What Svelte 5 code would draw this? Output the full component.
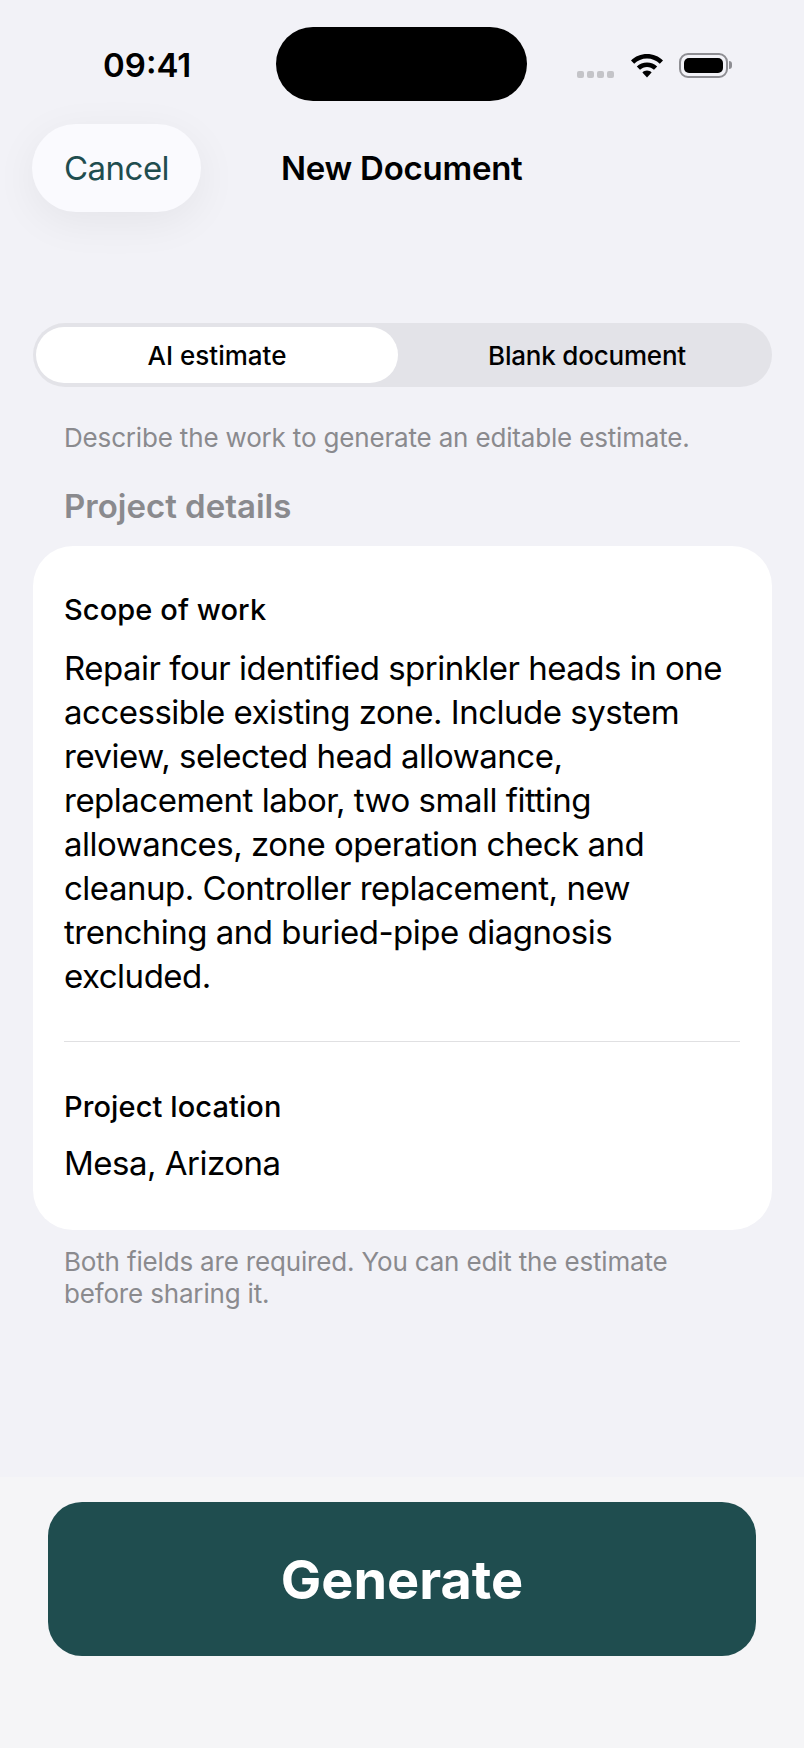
<script>
  let mode = $state("ai");
  const scope =
    "Repair four identified sprinkler heads in one accessible existing zone. Include system review, selected head allowance, replacement labor, two small fitting allowances, zone operation check and cleanup. Controller replacement, new trenching and buried-pipe diagnosis excluded.";
</script>

<div class="screen">
  <header class="status">
    <span class="time">09:41</span>
    <div class="island"></div>
    <div class="indicators">
      <span class="dots"><i></i><i></i><i></i><i></i></span>
      <svg class="wifi" width="34" height="25" viewBox="0 0 34 25">
        <path d="M17 1C10.8 1 5.2 3.4 1 7.4l3.2 3.4C7.6 7.600 12 5.600 17 5.600s9.400 2 12.800 5.200L33 7.400C28.800 3.400 23.200 1 17 1z" />
        <path d="M17 9.400c-3.900 0-7.500 1.500-10.200 4l3.200 3.400c1.800-1.700 4.300-2.800 7-2.800s5.200 1.100 7 2.800l3.200-3.400c-2.700-2.500-6.300-4-10.200-4z" />
        <path d="M17 17.600c-1.800 0-3.400.7-4.600 1.800L17 24.400l4.600-5c-1.200-1.100-2.800-1.800-4.600-1.800z" />
      </svg>
      <span class="battery"><span class="level"></span></span>
      <span class="nub"></span>
    </div>
  </header>

  <nav class="navbar">
    <button class="cancel">Cancel</button>
    <h1>New Document</h1>
  </nav>

  <main>
    <div class="segmented">
      <button class="seg" class:active={mode === "ai"} onclick={() => (mode = "ai")}>AI estimate</button>
      <button class="seg" class:active={mode === "blank"} onclick={() => (mode = "blank")}>Blank document</button>
    </div>

    <p class="hint">Describe the work to generate an editable estimate.</p>
    <h2>Project details</h2>

    <section class="card">
      <div class="field scope">
        <h3>Scope of work</h3>
        <p>{scope}</p>
      </div>
      <div class="field location">
        <h3>Project location</h3>
        <p>Mesa, Arizona</p>
      </div>
    </section>

    <p class="note">Both fields are required. You can edit the estimate before sharing it.</p>
  </main>

  <footer>
    <button class="generate">Generate</button>
  </footer>
</div>

<style>
  :global(body) {
    margin: 0;
    background: #f2f2f7;
  }

  .screen {
    width: 804px;
    height: 1748px;
    display: flex;
    flex-direction: column;
    background: #f2f2f7;
    font-family: Inter, "Liberation Sans", sans-serif;
    color: #000;
    overflow: hidden;
  }

  button {
    font-family: inherit;
    border: 0;
    cursor: pointer;
  }

  h1, h2, h3, p {
    margin: 0;
  }

  .status {
    display: grid;
    grid-template-columns: 276px 251px 1fr;
    align-items: center;
    height: 74px;
    margin-top: 27px;
  }

  .time {
    justify-self: start;
    margin: 2px 0 0 103px;
    font-size: 33px;
    font-weight: 600;
  }

  .island {
    height: 74px;
    border-radius: 37px;
    background: #000;
  }

  .indicators {
    display: flex;
    align-items: center;
    margin-left: 50px;
  }

  .dots {
    display: flex;
    gap: 3px;
    margin-top: 20px;
  }

  .dots i {
    width: 7px;
    height: 7px;
    border-radius: 2px;
    background: #c4c4c8;
  }

  .wifi {
    margin: 2px 0 0 16px;
    fill: #000;
  }

  .battery {
    display: block;
    box-sizing: border-box;
    width: 49px;
    height: 25px;
    margin: 2px 0 0 15px;
    padding: 3px;
    border: 2px solid #8e8e93;
    border-radius: 9px;
  }

  .level {
    display: block;
    height: 100%;
    border-radius: 5px;
    background: #000;
  }

  .nub {
    width: 3px;
    height: 8px;
    margin: 2px 0 0 1px;
    border-radius: 0 3px 3px 0;
    background: #8e8e93;
  }

  .navbar {
    display: flex;
    align-items: center;
    height: 88px;
    margin: 23px 0 0 32px;
  }

  .cancel {
    width: 169px;
    height: 88px;
    border-radius: 44px;
    background: #fafafe;
    color: #1f4d4f;
    font-size: 33px;
    letter-spacing: -0.5px;
    box-shadow: 0 10px 44px rgba(0, 0, 0, 0.06);
  }

  h1 {
    margin-left: 80px;
    font-size: 33px;
    font-weight: 600;
    letter-spacing: -0.25px;
  }

  main {
    padding: 111px 32px 0 33px;
  }

  .segmented {
    display: grid;
    grid-template-columns: 362px 1fr;
    column-gap: 7px;
    height: 64px;
    box-sizing: border-box;
    padding: 4px 3px;
    border-radius: 32px;
    background: #e3e3e8;
  }

  .seg {
    padding: 0;
    border-radius: 28px;
    background: transparent;
    color: #000;
    font-size: 26px;
    font-weight: 450;
    letter-spacing: -0.2px;
  }

  .seg.active {
    background: #fff;
    font-weight: 500;
    letter-spacing: 0;
  }

  .hint {
    margin: 35px 0 0 31px;
    font-size: 26px;
    line-height: 32px;
    letter-spacing: -0.17px;
    color: #8a8a8e;
  }

  h2 {
    margin: 32px 0 0 31px;
    font-size: 33px;
    line-height: 40px;
    font-weight: 600;
    color: #8a8a8e;
  }

  .card {
    margin-top: 20px;
    padding: 0 32px 0 31px;
    border-radius: 40px;
    background: #fff;
  }

  .field h3 {
    font-size: 29px;
    line-height: 36px;
    font-weight: 500;
    letter-spacing: 0.1px;
  }

  .field p {
    font-size: 33px;
    line-height: 44px;
    letter-spacing: -0.5px;
  }

  .scope {
    padding: 46px 0 43px;
    border-bottom: 1px solid #e0e0e2;
  }

  .scope p {
    margin-top: 18px;
  }

  .location {
    padding: 47px 0 45px;
  }

  .location p {
    margin-top: 16px;
  }

  .note {
    margin: 16px 32px 0 31px;
    font-size: 26px;
    line-height: 32px;
    letter-spacing: -0.17px;
    color: #8a8a8e;
  }

  footer {
    margin-top: auto;
    height: 271px;
    box-sizing: border-box;
    padding: 25px 48px 0 48px;
    background: #f5f5f7;
  }

  .generate {
    width: 100%;
    height: 154px;
    border-radius: 34px;
    background: #1f4d4f;
    color: #fff;
    font-size: 54px;
    font-weight: 700;
  }
</style>
